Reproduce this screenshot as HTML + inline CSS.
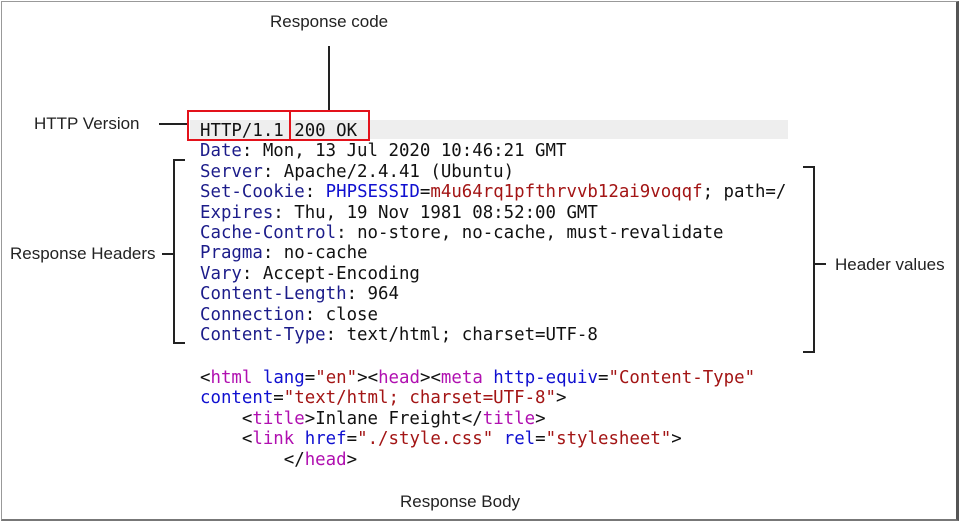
<!DOCTYPE html>
<html><head><meta charset="utf-8">
<style>
html,body{margin:0;padding:0;background:#fff;}
body{width:961px;height:521px;position:relative;overflow:hidden;}
.frame{position:absolute;left:1px;top:1px;width:954px;height:517px;border-left:1px solid #999;border-top:1px solid #999;border-bottom:2px solid #777;border-right:3px solid #555;}
.lbl{position:absolute;font-family:"Liberation Sans",sans-serif;font-size:17px;color:#222;white-space:nowrap;}
.code{position:absolute;left:200px;font-family:"DejaVu Sans Mono","Liberation Mono",monospace;font-size:17.4px;line-height:20.4px;color:#111;white-space:pre;}
.n{color:#1c1c8a}.b{color:#1010d0}.r{color:#a31515}.t{color:#b010b0}
.ln{position:absolute;background:#222;}
.red{position:absolute;border:2px solid #e3121b;box-sizing:border-box;}
</style></head><body>
<div class="frame"></div>
<div style="position:absolute;left:190px;top:120px;width:598px;height:19px;background:#eee;"></div>

<div class="lbl" style="left:270px;top:12px;">Response code</div>
<div class="ln" style="left:328px;top:46px;width:2px;height:65px;"></div>
<div class="lbl" style="left:34px;top:114px;">HTTP Version</div>
<div class="ln" style="left:159px;top:123px;width:30px;height:2px;"></div>

<div class="code" style="top:121px;">HTTP/1.1 200 OK
<span class="n">Date</span>: Mon, 13 Jul 2020 10:46:21 GMT
<span class="n">Server</span>: Apache/2.4.41 (Ubuntu)
<span class="n">Set-Cookie</span>: <span class="b">PHPSESSID</span>=<span class="r">m4u64rq1pfthrvvb12ai9voqqf</span>; path=/
<span class="n">Expires</span>: Thu, 19 Nov 1981 08:52:00 GMT
<span class="n">Cache-Control</span>: no-store, no-cache, must-revalidate
<span class="n">Pragma</span>: no-cache
<span class="n">Vary</span>: Accept-Encoding
<span class="n">Content-Length</span>: 964
<span class="n">Connection</span>: close
<span class="n">Content-Type</span>: text/html; charset=UTF-8</div>

<div class="red" style="left:187px;top:110px;width:104px;height:31px;"></div>
<div class="red" style="left:289px;top:110px;width:81px;height:31px;"></div>

<div class="ln" style="left:173px;top:159px;width:2px;height:185px;"></div>
<div class="ln" style="left:173px;top:159px;width:12px;height:2px;"></div>
<div class="ln" style="left:173px;top:342px;width:12px;height:2px;"></div>
<div class="ln" style="left:162px;top:253px;width:12px;height:2px;"></div>
<div class="lbl" style="left:10px;top:244px;">Response Headers</div>

<div class="ln" style="left:813px;top:166px;width:2px;height:187px;"></div>
<div class="ln" style="left:803px;top:166px;width:12px;height:2px;"></div>
<div class="ln" style="left:803px;top:351px;width:12px;height:2px;"></div>
<div class="ln" style="left:814px;top:263px;width:12px;height:2px;"></div>
<div class="lbl" style="left:835px;top:255px;">Header values</div>

<div class="code" style="top:368px;">&lt;<span class="t">html</span> <span class="b">lang</span>=<span class="r">"en"</span>&gt;&lt;<span class="t">head</span>&gt;&lt;<span class="t">meta</span> <span class="b">http-equiv</span>=<span class="r">"Content-Type"</span>
<span class="b">content</span>=<span class="r">"text/html; charset=UTF-8"</span>&gt;
    &lt;<span class="t">title</span>&gt;Inlane Freight&lt;/<span class="t">title</span>&gt;
    &lt;<span class="t">link</span> <span class="b">href</span>=<span class="r">"./style.css"</span> <span class="b">rel</span>=<span class="r">"stylesheet"</span>&gt;
        &lt;/<span class="t">head</span>&gt;</div>

<div class="lbl" style="left:400px;top:492px;">Response Body</div>
</body></html>
